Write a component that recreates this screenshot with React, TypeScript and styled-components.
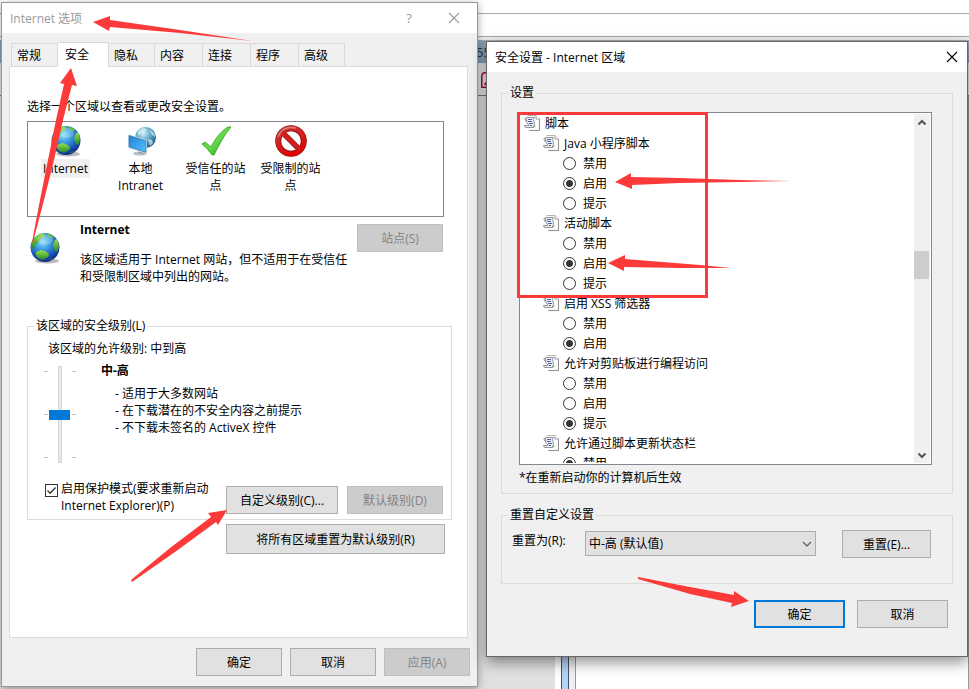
import React from "react";
import styled, { createGlobalStyle, css } from "styled-components";

const GlobalStyle = createGlobalStyle`
  * { box-sizing: border-box; }
  body {
    margin: 0;
    background: #fff;
    color: #000;
    font: 12px/17px "Open Sans", "Noto Sans CJK SC", sans-serif;
  }
  button, input, select { font: inherit; margin: 0; }
  fieldset { min-width: 0; margin: 0; }
`;

/* ---------- desktop ---------- */

const Desktop = styled.div`
  position: relative;
  min-height: 100vh;
  overflow: hidden;
  display: grid;
  grid-template-columns: minmax(0, 478fr) minmax(0, 491fr);
  align-items: start;
`;

const Backdrop = styled.div`
  position: absolute;
  inset: 0;
  display: flex;
  flex-direction: column;
`;

const BackBar = styled.div<{ $h: number; $bg: string }>`
  height: ${(p) => p.$h}px;
  flex: none;
  background: ${(p) => p.$bg};
  border-bottom: 1px solid #aaa;
`;

const BackTabs = styled.div`
  height: 22px;
  flex: none;
  display: flex;
  align-items: center;
  padding-left: 476px;
  background: #86a3b9;
  color: #333;
  font-size: 13px;
`;

const BackTools = styled.div`
  height: 33px;
  flex: none;
  padding: 9px 0 0 481px;
  background: #e6e6e6;
  border-bottom: 1px solid #777;
`;

const BackBody = styled.div`
  flex: 1;
  display: grid;
  grid-template-columns: 555px 6px 8px 6px 1fr;
`;

const BackPane = styled.div<{ $bg: string; $edge?: string }>`
  background: ${(p) => p.$bg};
  border: 0 solid ${(p) => p.$edge ?? "transparent"};
  border-width: 0 ${(p) => (p.$edge ? 1 : 0)}px;
`;

/* ---------- dialog frame ---------- */

const Dialog = styled.section<{ $back?: boolean }>`
  position: relative;
  display: flex;
  flex-direction: column;
  border: 1px solid ${(p) => (p.$back ? "#999" : "#666")};
  background: #f0f0f0;
  margin: ${(p) => (p.$back ? "2px 0 0 1px" : "41px 1px 0 8px")};
  box-shadow: ${(p) =>
    p.$back ? "0 2px 8px rgba(0,0,0,.35)" : "0 5px 14px rgba(0,0,0,.45)"};
`;

const TitleBar = styled.header<{ $dim?: boolean }>`
  height: 30px;
  display: flex;
  align-items: center;
  padding: 0 ${(p) => (p.$dim ? 17 : 9)}px 0 8px;
  background: #fff;
  color: ${(p) => (p.$dim ? "#999" : "#000")};
`;

const Title = styled.h1`
  flex: 1;
  margin: 0;
  font-size: 12px;
  font-weight: 400;
`;

const CaptionButton = styled.button<{ $gap?: number }>`
  border: 0;
  padding: 0;
  width: 12px;
  height: 20px;
  margin-left: ${(p) => p.$gap ?? 0}px;
  background: none;
  color: inherit;
  display: flex;
  align-items: center;
  justify-content: center;
  font-size: 13px;
`;

const PushButton = styled.button<{ $w: number; $h?: number; $default?: boolean }>`
  width: ${(p) => p.$w}px;
  height: ${(p) => p.$h ?? 28}px;
  flex: none;
  padding: 0;
  border: ${(p) => (p.$default ? "2px solid #0078d7" : "1px solid #adadad")};
  background: #e1e1e1;
  color: #000;
  &:disabled {
    background: #ccc;
    border-color: #bfbfbf;
    color: #838383;
  }
`;

const Group = styled.fieldset`
  border: 1px solid #dcdcdc;
  padding: 0;
`;

const Legend = styled.legend`
  margin-left: 6px;
  padding: 0 2px;
  line-height: 18px;
`;

/* ---------- options dialog ---------- */

const Tabs = styled.nav`
  display: flex;
  align-items: flex-end;
  height: 24px;
  margin: 9px 0 0 9px;
`;

const Tab = styled.button<{ $w: number; $active?: boolean }>`
  width: ${(p) => p.$w}px;
  height: 23px;
  padding: 1px 0 0 5px;
  text-align: left;
  border: 1px solid #d9d9d9;
  border-bottom: 0;
  border-left-width: 0;
  background: #f0f0f0;
  color: #000;
  &:first-child { border-left-width: 1px; }
  ${(p) =>
    p.$active &&
    css`
      position: relative;
      height: 25px;
      margin-bottom: -1px;
      padding: 0 0 2px 7px;
      background: #fff;
    `}
`;

const Panel = styled.div`
  margin: 0 9px 0 7px;
  padding: 31px 15px 83px 17px;
  border: 1px solid #dcdcdc;
  background: #fff;
`;

const Prompt = styled.p`
  margin: 0;
  line-height: 18px;
`;

const ZoneList = styled.div`
  display: flex;
  height: 96px;
  margin: 5px 8px 0 0;
  border: 1px solid #828790;
`;

const Zone = styled.button`
  width: 75px;
  border: 0;
  padding: 3px 4px 0;
  background: none;
  color: #000;
  display: flex;
  flex-direction: column;
  align-items: center;
  line-height: 17px;
`;

const ZoneName = styled.span<{ $selected?: boolean }>`
  margin-top: 2px;
  padding: 1px 2px;
  background: ${(p) => (p.$selected ? "#f0f0f0" : "transparent")};
`;

const ZoneInfo = styled.div`
  display: grid;
  grid-template-columns: 53px 1fr auto;
  margin-right: 9px;
  padding-top: 4px;
`;

const ZoneIcon = styled.div`
  padding: 11px 0 0 2px;
`;

const ZoneText = styled.div`
  min-width: 0;
  p { margin: 13px -14px 0 0; width: 274px; }
`;

const InfoButton = styled.div`
  padding-top: 3px;
`;

const LevelGroup = styled(Group)`
  margin-top: 32px;
`;

const Allowed = styled.p`
  margin: 5px 0 0 20px;
`;

const LevelRow = styled.div`
  display: flex;
  margin: 5px 0 0 16px;
  height: 124px;
`;

const SliderBox = styled.div`
  display: grid;
  grid-template-columns: 5px 22px 5px;
  height: 97px;
  margin-top: 4px;
`;

const Ticks = styled.div<{ $right?: boolean }>`
  display: flex;
  flex-direction: column;
  justify-content: space-between;
  align-items: ${(p) => (p.$right ? "flex-end" : "flex-start")};
  padding: 5px 0;
`;

const Tick = styled.i`
  width: 4px;
  height: 1px;
  background: #c4c4c4;
`;

const LevelSlider = styled.input`
  appearance: none;
  writing-mode: vertical-lr;
  direction: rtl;
  width: 21px;
  height: 97px;
  background: linear-gradient(#d6d6d6, #d6d6d6) center / 4px 97px no-repeat;
  &::-webkit-slider-runnable-track {
    width: 21px;
    height: 97px;
    background: linear-gradient(#e7eaea, #e7eaea) center / 2px 95px no-repeat;
  }
  &::-webkit-slider-thumb {
    appearance: none;
    width: 21px;
    height: 10px;
    background: #0078d7;
  }
`;

const LevelText = styled.div`
  margin-left: 25px;
  ul {
    list-style: none;
    margin: 6px 0 0 14px;
    padding: 0;
  }
`;

const ModeRow = styled.div`
  display: flex;
  align-items: flex-start;
  gap: 9px;
  padding: 0 8px 5px 17px;
`;

const ModeLabel = styled.label`
  display: grid;
  grid-template-columns: 13px 1fr;
  gap: 3px;
  flex: 1;
  margin-top: -6px;
`;

const CheckBox = styled.input`
  appearance: none;
  width: 13px;
  height: 13px;
  margin-top: 4px;
  border: 1px solid #333;
  background: #fff;
  &:checked {
    background: url("data:image/svg+xml,%3Csvg xmlns='http://www.w3.org/2000/svg' viewBox='0 0 11 11'%3E%3Cpath d='M1.5 5.5 4.2 8.2 9.6 2.5' fill='none' stroke='%23333' stroke-width='1.3'/%3E%3C/svg%3E");
  }
`;

const ResetAll = styled.div`
  display: flex;
  justify-content: flex-end;
  margin: 4px 7px 0 0;
`;

const Footer = styled.footer<{ $gap: number; $pad: string }>`
  display: flex;
  justify-content: flex-end;
  gap: ${(p) => p.$gap}px;
  padding: ${(p) => p.$pad};
`;

/* ---------- security settings dialog ---------- */

const Body = styled.div`
  padding: 12px 14px 0;
`;

const ListFrame = styled.div`
  display: flex;
  height: 353px;
  margin: 10px 20px 0 17px;
  padding: 0 1px 1px;
  border: 1px solid #828790;
  background: #fff;
`;

const Tree = styled.div`
  flex: 1;
  overflow: hidden;
`;

const TreeRow = styled.div<{ $level: number }>`
  display: flex;
  align-items: center;
  height: 20px;
  gap: 5px;
  padding-left: ${(p) => 3 + p.$level * 19}px;
`;

const OptionLabel = styled.label`
  display: flex;
  align-items: center;
  height: 20px;
  gap: 7px;
  padding-left: 42px;
`;

const Radio = styled.input`
  appearance: none;
  width: 13px;
  height: 13px;
  border: 1px solid #333;
  border-radius: 50%;
  background: #fff;
  &:checked { background: radial-gradient(circle, #333 3px, #fff 4px); }
`;

const ScrollBar = styled.div`
  width: 16px;
  margin-top: 1px;
  display: grid;
  grid-template-rows: 17px 120fr 28px 167fr 17px;
  background: #f0f0f0;
`;

const ScrollButton = styled.button<{ $row: number }>`
  grid-row: ${(p) => p.$row};
  border: 0;
  padding: 0;
  background: none;
  display: flex;
  align-items: center;
  justify-content: center;
`;

const ScrollThumb = styled.div`
  grid-row: 3;
  width: 15px;
  background: #cdcdcd;
`;

const Note = styled.p`
  margin: 4px 0 7px 17px;
`;

const ResetGroup = styled(Group)`
  margin-top: 12px;
`;

const ResetRow = styled.div`
  display: flex;
  align-items: flex-start;
  padding: 6px 21px 25px 10px;
  label { width: 73px; margin-top: 2px; }
`;

const SelectWrap = styled.div`
  flex: 1;
  display: grid;
  margin: 1px 26px 0 0;
  svg { grid-area: 1 / 1; place-self: center end; margin-right: 4px; pointer-events: none; }
`;

const Select = styled.select`
  grid-area: 1 / 1;
  appearance: none;
  height: 25px;
  padding: 0 3px;
  border: 1px solid #adadad;
  border-radius: 0;
  background: #e1e1e1;
  color: #000;
`;

const Marks = styled.svg`
  position: absolute;
  left: 0;
  top: 0;
  pointer-events: none;
`;

/* ---------- drawings ---------- */

const Globe = () => (
  <svg width="32" height="32" viewBox="0 0 32 32" aria-hidden="true">
    <defs>
      <radialGradient id="sea" cx=".42" cy=".3" r=".72">
        <stop offset="0" stopColor="#8fe0f8" />
        <stop offset=".38" stopColor="#3a9be0" />
        <stop offset=".75" stopColor="#1a4fb4" />
        <stop offset="1" stopColor="#142a78" />
      </radialGradient>
      <linearGradient id="land" x2="0" y2="1">
        <stop offset="0" stopColor="#9be04e" />
        <stop offset="1" stopColor="#23862b" />
      </linearGradient>
    </defs>
    <ellipse cx="18" cy="29" rx="12" ry="2.4" fill="#777" opacity=".5" />
    <circle cx="16" cy="15.5" r="14.5" fill="url(#sea)" />
    <path d="M3 10C5 5 9 2 14 1l2 2-2 3-3 1-1 3-3 2-2 4-3 1c-.3-3 .3-5 1-7z" fill="url(#land)" />
    <path d="M17 1.5l5 1 3 3-3 .5-3-2z" fill="#5fbd3d" />
    <path d="M26 8l2-1 2 6-1 6-2 1-2-3-1-4z" fill="url(#land)" />
    <path d="M7 20l5-2 4 1 4 3-1 3-5 3-5-2-2-3z" fill="url(#land)" />
    <path d="M20 28l4-2-2 2z" fill="#3b9a39" />
    <ellipse cx="16" cy="8" rx="8" ry="5" fill="#fff" opacity=".2" />
  </svg>
);

const Intranet = () => (
  <svg width="32" height="32" viewBox="0 0 32 32" aria-hidden="true">
    <defs>
      <radialGradient id="net" cx=".4" cy=".3" r=".7">
        <stop offset="0" stopColor="#d4f1fa" />
        <stop offset=".5" stopColor="#5ea9cb" />
        <stop offset="1" stopColor="#276087" />
      </radialGradient>
      <linearGradient id="screen" x2="1" y2="1">
        <stop offset="0" stopColor="#2583d4" />
        <stop offset="1" stopColor="#4fc0ff" />
      </linearGradient>
    </defs>
    <circle cx="20.5" cy="12.500" r="10.500" fill="url(#net)" />
    <path d="M13 6l5-3 4 1-2 3-4 1-3 3zM24 4l5 4 1 4-3-2zM23 14l4 1 1 3-3 3z" fill="#e0f4f8" opacity=".65" />
    <ellipse cx="15" cy="28.500" rx="7" ry="2" fill="#b7c0c7" />
    <path d="M13 25l6 1 1 3-6-1z" fill="#8d9aa5" />
    <path d="M3 9l19 6v14L3 23z" fill="#dce8f1" />
    <path d="M4 10.500l17 5.300v11.600L4 22z" fill="url(#screen)" stroke="#286594" strokeWidth=".6" />
  </svg>
);

const Tick32 = () => (
  <svg width="32" height="32" viewBox="0 0 32 32" aria-hidden="true">
    <defs>
      <linearGradient id="tick" x2="1" y2="1">
        <stop offset="0" stopColor="#4cc52c" />
        <stop offset=".5" stopColor="#65dc49" />
        <stop offset="1" stopColor="#168a13" />
      </linearGradient>
    </defs>
    <path d="M2 19l3-2 6 5C15 14 21 6 28 2h3C24 10 19 20 14 30h-2C9 26 6 22 2 19z" fill="url(#tick)" stroke="#3a9b28" strokeWidth=".8" />
  </svg>
);

const Forbidden = () => (
  <svg width="32" height="32" viewBox="0 0 32 32" aria-hidden="true">
    <defs>
      <linearGradient id="stop" x2=".5" y2="1">
        <stop offset="0" stopColor="#c93a3a" />
        <stop offset="1" stopColor="#e00505" />
      </linearGradient>
    </defs>
    <circle cx="16" cy="16" r="12.800" fill="#fff" stroke="#8e1414" strokeWidth="6" />
    <path d="M7.500 7.500l17 17" stroke="#a01515" strokeWidth="5.500" />
    <circle cx="16" cy="16" r="13" fill="none" stroke="url(#stop)" strokeWidth="4.500" />
    <path d="M7 7l18 18" stroke="#d01f1f" strokeWidth="4" />
    <path d="M3 12C6 4 13 1 21 3" fill="none" stroke="#fff" opacity=".35" strokeWidth="1.500" />
  </svg>
);

const ScriptIcon = () => (
  <svg width="16" height="16" viewBox="0 0 16 16" aria-hidden="true">
    <path d="M3.500.5H12L15.500 4v11.500H5.500" fill="#fafafa" stroke="#b5b5b5" />
    <path d="M15.500 4v11.500H5.500" fill="none" stroke="#8f8f8f" />
    <path d="M12 .5V4h3.500" fill="#fff" stroke="#a5a5a5" />
    <path d="M2.500 2.500h8Q8.500 4 10 6.500T9 12.500H2Q.5 12.300.5 10.500H5Q4.500 9 3 8T2.500 2.500z" fill="#eef1f4" stroke="#969696" />
    <path d="M2 2.500Q0 4 1.500 5.500H3.500M9 12.500q2 0 2-2" fill="none" stroke="#969696" />
    <path d="M4 4.500h4M4 6.500h4M5 8.500h4M6 10.500h2" stroke="#4b62ae" />
  </svg>
);

const Cross = () => (
  <svg width="12" height="12" viewBox="0 0 12 12" aria-hidden="true">
    <path d="M1 1l10 10M11 1L1 11" stroke="currentColor" strokeWidth="1.100" />
  </svg>
);

const Chevron = ({ up, thin }: { up?: boolean; thin?: boolean }) => (
  <svg width="10" height="8" viewBox="0 0 10 8" aria-hidden="true">
    <path
      d={up ? "M1.500 5.500L5 2l3.500 3.500" : thin ? "M1 2l4 4 4-4" : "M1.500 2.500L5 6l3.500-3.500"}
      fill="none"
      stroke="#555"
      strokeWidth={thin ? 1.1 : 2}
    />
  </svg>
);

/* ---------- data ---------- */

const tabs: [string, number][] = [
  ["常规", 47], ["安全", 51], ["隐私", 46], ["内容", 48], ["连接", 48], ["程序", 48], ["高级", 46],
];

const zones = [
  { icon: <Globe />, name: "Internet" },
  { icon: <Intranet />, name: "本地 Intranet" },
  { icon: <Tick32 />, name: "受信任的站点" },
  { icon: <Forbidden />, name: "受限制的站点" },
];

const settings = [
  { name: "Java 小程序脚本", options: ["禁用", "启用", "提示"], value: 1 },
  { name: "活动脚本", options: ["禁用", "启用", "提示"], value: 1 },
  { name: "启用 XSS 筛选器", options: ["禁用", "启用"], value: 1 },
  { name: "允许对剪贴板进行编程访问", options: ["禁用", "启用", "提示"], value: 2 },
  { name: "允许通过脚本更新状态栏", options: ["禁用"], value: 0 },
];

/* ---------- dialogs ---------- */

const OptionsDialog = () => (
  <Dialog $back>
    <TitleBar $dim>
      <Title>Internet 选项</Title>
      <CaptionButton aria-label="帮助">?</CaptionButton>
      <CaptionButton $gap={33} aria-label="关闭"><Cross /></CaptionButton>
    </TitleBar>
    <Tabs>
      {tabs.map(([name, w], i) => (
        <Tab key={name} $w={w} $active={i === 1}>{name}</Tab>
      ))}
    </Tabs>
    <Panel>
      <Prompt>选择一个区域以查看或更改安全设置。</Prompt>
      <ZoneList>
        {zones.map((z, i) => (
          <Zone key={z.name}>
            {z.icon}
            <ZoneName $selected={i === 0}>{z.name}</ZoneName>
          </Zone>
        ))}
      </ZoneList>
      <ZoneInfo>
        <ZoneIcon><Globe /></ZoneIcon>
        <ZoneText>
          <strong>Internet</strong>
          <p>该区域适用于 Internet 网站，但不适用于在受信任和受限制区域中列出的网站。</p>
        </ZoneText>
        <InfoButton><PushButton $w={86} disabled>站点(S)</PushButton></InfoButton>
      </ZoneInfo>
      <LevelGroup>
        <Legend>该区域的安全级别(L)</Legend>
        <Allowed>该区域的允许级别: 中到高</Allowed>
        <LevelRow>
          <SliderBox>
            <Ticks><Tick /><Tick /><Tick /></Ticks>
            <LevelSlider type="range" min={0} max={2} defaultValue={1} aria-label="该区域的安全级别" />
            <Ticks $right><Tick /><Tick /><Tick /></Ticks>
          </SliderBox>
          <LevelText>
            <strong>中-高</strong>
            <ul>
              <li>- 适用于大多数网站</li>
              <li>- 在下载潜在的不安全内容之前提示</li>
              <li>- 不下载未签名的 ActiveX 控件</li>
            </ul>
          </LevelText>
        </LevelRow>
        <ModeRow>
          <ModeLabel>
            <CheckBox type="checkbox" defaultChecked />
            <span>启用保护模式(要求重新启动 Internet Explorer)(P)</span>
          </ModeLabel>
          <PushButton $w={112}>自定义级别(C)...</PushButton>
          <PushButton $w={96} disabled>默认级别(D)</PushButton>
        </ModeRow>
      </LevelGroup>
      <ResetAll>
        <PushButton $w={219} $h={30}>将所有区域重置为默认级别(R)</PushButton>
      </ResetAll>
    </Panel>
    <Footer $gap={8} $pad="10px 7px 10px">
      <PushButton $w={86}>确定</PushButton>
      <PushButton $w={86}>取消</PushButton>
      <PushButton $w={86} disabled>应用(A)</PushButton>
    </Footer>
  </Dialog>
);

const SettingsDialog = () => (
  <Dialog>
    <TitleBar>
      <Title>安全设置 - Internet 区域</Title>
      <CaptionButton aria-label="关闭"><Cross /></CaptionButton>
    </TitleBar>
    <Body>
      <Group>
        <Legend>设置</Legend>
        <ListFrame>
          <Tree>
            <TreeRow $level={0}><ScriptIcon />脚本</TreeRow>
            {settings.map((s) => (
              <React.Fragment key={s.name}>
                <TreeRow $level={1}><ScriptIcon />{s.name}</TreeRow>
                {s.options.map((o, i) => (
                  <OptionLabel key={o}>
                    <Radio type="radio" name={s.name} defaultChecked={i === s.value} />
                    {o}
                  </OptionLabel>
                ))}
              </React.Fragment>
            ))}
          </Tree>
          <ScrollBar>
            <ScrollButton $row={1} aria-label="向上滚动"><Chevron up /></ScrollButton>
            <ScrollThumb />
            <ScrollButton $row={5} aria-label="向下滚动"><Chevron /></ScrollButton>
          </ScrollBar>
        </ListFrame>
        <Note>*在重新启动你的计算机后生效</Note>
      </Group>
      <ResetGroup>
        <Legend>重置自定义设置</Legend>
        <ResetRow>
          <label htmlFor="reset-level">重置为(R):</label>
          <SelectWrap>
            <Select id="reset-level"><option>中-高 (默认值)</option></Select>
            <Chevron thin />
          </SelectWrap>
          <PushButton $w={89}>重置(E)...</PushButton>
        </ResetRow>
      </ResetGroup>
    </Body>
    <Footer $gap={12} $pad="16px 19px 28px">
      <PushButton $w={91} $default>确定</PushButton>
      <PushButton $w={91}>取消</PushButton>
    </Footer>
  </Dialog>
);

const arrows = [
  "93,22 110,16 110,20 180,30 252,41 180,33 110,27 109,31",
  "71,68 77,86 72,85 63,120 54,160 44,200 33,242 32,242 40,200 48,160 56,120 64,84 60,83",
  "227,510 218,525 216,522 175,552 132,582 131,580 170,548 211,517 208,513",
  "615,182 631,173 631,177 680,178 740,180 792,181 740,182 680,183 632,185 632,189",
  "608,263 625,255 625,259 700,265 731,268 680,268 624,267 624,271",
  "749,601 734,591 734,595 690,587 638,577 638,579 690,594 732,603 731,607",
];

export default function App() {
  return (
    <>
      <GlobalStyle />
      <Desktop>
        <Backdrop>
          <BackBar $h={14} $bg="#fff" />
          <BackBar $h={23} $bg="#fff" />
          <BackBar $h={4} $bg="#f0f0f0" />
          <BackTabs>55</BackTabs>
          <BackTools>
            <svg width="16" height="16" viewBox="0 0 16 16" aria-hidden="true">
              <path d="M.8 15.200V4Q1 .8 4 .8h11.200v14.400z" fill="#f5dce6" stroke="#a00b4d" strokeWidth="1.500" />
              <path d="M3 13L8 4v9z" fill="#70103b" />
            </svg>
          </BackTools>
          <BackBody>
            <BackPane $bg="#e0e0e0" />
            <BackPane $bg="#fff" />
            <BackPane $bg="#b5d3f2" $edge="#40506a" />
            <BackPane $bg="#f0f0f0" />
            <BackPane $bg="#fff" $edge="#999" />
          </BackBody>
        </Backdrop>
        <OptionsDialog />
        <SettingsDialog />
        <Marks width="969" height="689" viewBox="0 0 969 689" aria-hidden="true">
          <rect x="518.500" y="113.500" width="188" height="183" fill="none" stroke="#fc3a39" strokeWidth="3" />
          {arrows.map((points) => (
            <polygon key={points} points={points} fill="#fc3a39" />
          ))}
        </Marks>
      </Desktop>
    </>
  );
}
